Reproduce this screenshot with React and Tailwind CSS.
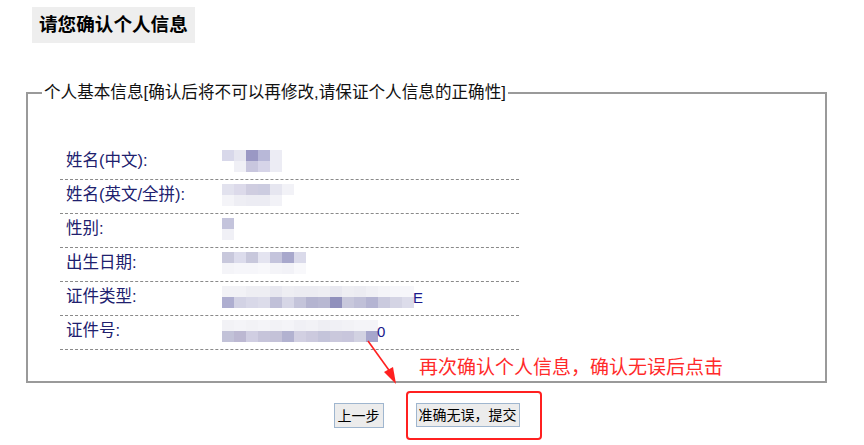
const rows = [
  {
    label: "姓名(中文):",
    top: ["#d8d8ea", "#e6e6f0", "#9a98c4", "#b8b8d8", "#ececf4"],
    bottom: ["#ffffff", "#f0f0f6", "#c8c6de", "#d6d4e8", "#ececf4"],
  },
  {
    label: "姓名(英文/全拼):",
    top: ["#e2e2ee", "#dcdaea", "#cfcde0", "#cccce0", "#e6e6f0", "#f2f2f7"],
    bottom: ["#f4f4f8", "#eeeef4", "#ececf3", "#ececf3", "#f2f2f7", "#ffffff"],
  },
  {
    label: "性别:",
    top: ["#c4c4dc"],
    bottom: ["#f0f0f6"],
  },
  {
    label: "出生日期:",
    top: ["#c8c8dc", "#dcdcec", "#c8c8dc", "#e4e4f0", "#c4c4dc", "#a8a8cc", "#dadaea"],
    bottom: ["#f4f4f8", "#f6f6fa", "#f6f6fa", "#f8f8fb", "#f4f4f8", "#f2f2f7", "#f8f8fb"],
  },
  {
    label: "证件类型:",
    top: ["#f2f2f6", "#f2f2f6", "#eeeef3", "#eeeef3", "#e8e8f0", "#eeeef3", "#ececf2", "#ececf2", "#eeeef3", "#e8e8f0", "#eeeef3", "#ececf2", "#f0f0f5", "#f4f4f8", "#f6f6fa", "#f6f6fa"],
    bottom: ["#aeaed0", "#d2d2e4", "#d8d8e8", "#dcdcea", "#c0c0d8", "#d6d6e6", "#c4c4da", "#b4b4d0", "#b8b8d2", "#9090bc", "#c8c8dc", "#c0c0d8", "#b4b4d2", "#cacade", "#d4d4e4", "#dcdcea"],
    tail: "E",
  },
  {
    label: "证件号:",
    top: ["#f2f2f6", "#f4f4f8", "#f2f2f6", "#f4f4f8", "#f2f2f6", "#f4f4f8", "#f0f0f5", "#f2f2f6", "#eeeef3", "#f0f0f5", "#f2f2f6", "#f4f4f8", "#f4f4f8"],
    bottom: ["#c2c2d8", "#bcb8d2", "#d0cee2", "#c6c4da", "#c4c2d8", "#b2b2d0", "#d2d0e2", "#cccade", "#c4c4da", "#cac8dc", "#c8c6dc", "#d2d2e2", "#a6a6cc"],
    tail: "0",
  },
];

function Mosaic({ top, bottom, tail }) {
  return (
    <div className="flex items-end">
      <div className="flex flex-col">
        <div className="flex">
          {top.map((c, i) => (
            <div key={i} className="w-[12px] h-[11px]" style={{ backgroundColor: c }} />
          ))}
        </div>
        <div className="flex">
          {bottom.map((c, i) => (
            <div key={i} className="w-[12px] h-[11px]" style={{ backgroundColor: c }} />
          ))}
        </div>
      </div>
      {tail && <span className="text-[15px] leading-[18px] text-[#1a1a8c] -ml-[1px] pb-[1px]">{tail}</span>}
    </div>
  );
}

function App() {
  return (
    <div
      className="relative w-[864px] h-[445px] bg-white overflow-hidden text-black"
      style={{ fontFamily: '"Liberation Sans", "Noto Sans CJK SC", sans-serif' }}
    >
      <div className="pt-[7px] pl-[32px]">
        <h1 className="inline-block bg-[#eeeeee] px-[7px] h-[36px] leading-[36px] text-[18.6px] font-bold">
          请您确认个人信息
        </h1>
      </div>

      <fieldset className="ml-[26px] mt-[40px] w-[801px] border-2 border-[#9a9a9a] pl-[32px] pr-0 pb-[31px] pt-[43px]">
        <legend className="ml-[-18px] px-[2px] text-[16.6px] leading-[20px] text-[#111]">
          个人基本信息[确认后将不可以再修改,请保证个人信息的正确性]
        </legend>

        <div className="w-[459px]">
          {rows.map((r) => (
            <div
              key={r.label}
              className="flex items-center h-[34px] border-b border-dashed border-[#8a8a8a] pb-[4px]"
            >
              <span className="w-[162px] pl-[6px] text-[16.5px] text-[#20206e]">{r.label}</span>
              <Mosaic top={r.top} bottom={r.bottom} tail={r.tail} />
            </div>
          ))}
        </div>
      </fieldset>

      <div className="flex justify-center gap-[32px] mt-[20px] w-[853px]">
        <button className="h-[25px] w-[50px] border border-[#9fb6cf] bg-[#ececec] text-[14px] leading-[22px]">
          上一步
        </button>
        <div className="relative">
          <button className="h-[24px] w-[104px] border border-[#9fb6cf] bg-[#ececec] text-[14px] leading-[22px]">
            准确无误，提交
          </button>
          <div className="absolute left-[-10px] top-[-12px] w-[136px] h-[49px] border-2 border-[#ff2020] rounded-[4px]" />
        </div>
      </div>

      <div className="absolute left-[419px] top-[356px] text-[19px] leading-[24px] text-[#ff2a2a]">
        再次确认个人信息，确认无误后点击
      </div>

      <svg className="absolute left-0 top-0" width="864" height="445" viewBox="0 0 864 445">
        <line x1="368" y1="341" x2="391" y2="373" stroke="#ff2020" strokeWidth="1.6" />
        <polygon points="396,384 384,372 393,367" fill="#ff2020" />
      </svg>
    </div>
  );
}

export default App;
